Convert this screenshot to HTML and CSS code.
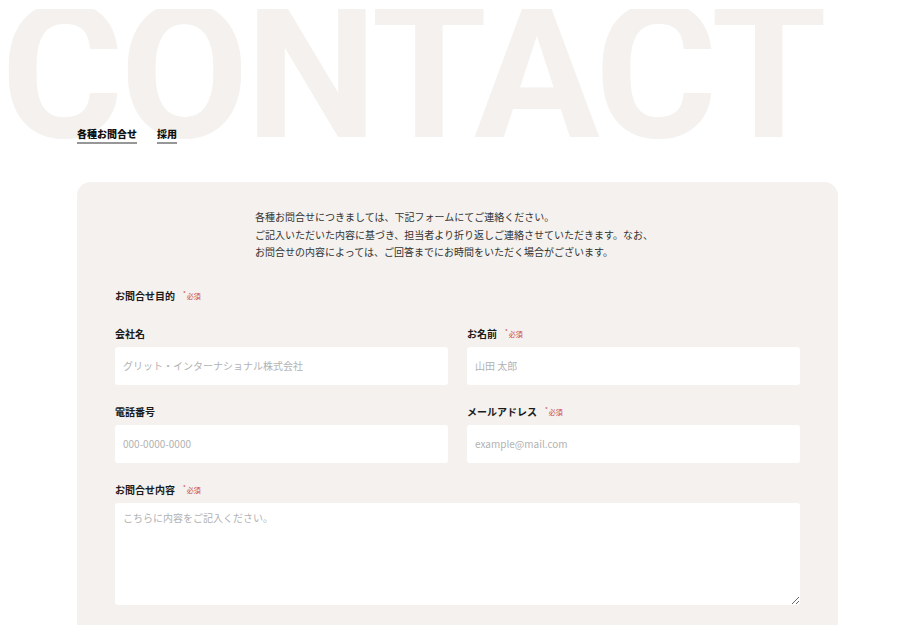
FILE: index.html
```html
<!DOCTYPE html>
<html lang="ja">
<head>
<meta charset="utf-8">
<title>CONTACT</title>
<link rel="stylesheet" href="styles.css">
</head>
<body>
<header class="hero">
  <div class="hero-word" aria-hidden="true">CONTACT</div>
  <nav class="tabs">
    <a class="tab" href="#">各種お問合せ</a>
    <a class="tab" href="#">採用</a>
  </nav>
</header>
<main class="card">
  <p class="intro">各種お問合せにつきましては、下記フォームにてご連絡ください。<br>ご記入いただいた内容に基づき、担当者より折り返しご連絡させていただきます。なお、<br>お問合せの内容によっては、ご回答までにお時間をいただく場合がございます。</p>
  <div class="purpose">
    <span class="label">お問合せ目的<span class="req"><span class="ast">*</span>必須</span></span>
  </div>
  <form class="grid">
    <label class="field">
      <span class="label">会社名</span>
      <input class="input" type="text" placeholder="グリット・インターナショナル株式会社">
    </label>
    <label class="field">
      <span class="label">お名前<span class="req"><span class="ast">*</span>必須</span></span>
      <input class="input" type="text" placeholder="山田 太郎">
    </label>
    <label class="field">
      <span class="label">電話番号</span>
      <input class="input" type="text" placeholder="000-0000-0000">
    </label>
    <label class="field">
      <span class="label">メールアドレス<span class="req"><span class="ast">*</span>必須</span></span>
      <input class="input" type="text" placeholder="example@mail.com">
    </label>
    <label class="field wide">
      <span class="label">お問合せ内容<span class="req"><span class="ast">*</span>必須</span></span>
      <textarea class="input textarea" placeholder="こちらに内容をご記入ください。"></textarea>
    </label>
  </form>
</main>
</body>
</html>
```
FILE: styles.css
```css
* { box-sizing: border-box; }
html, body { margin: 0; padding: 0; background: #fff; }
body {
  font-family: "Noto Sans CJK JP", "Noto Sans", sans-serif;
  color: #222;
  font-size: 10px;
}
.hero {
  display: grid;
  grid-template-rows: 135px;
  margin-top: 9px;
  height: 135px;
  overflow: hidden;
}
.hero-word {
  grid-area: 1 / 1;
  font-family: Roboto, "Liberation Sans", sans-serif;
  font-weight: 700;
  font-size: 187px;
  line-height: 187px;
  letter-spacing: -3.4px;
  color: #f4f1ee;
  margin-top: -29px;
  margin-left: 1px;
  white-space: nowrap;
  align-self: start;
}
.tabs {
  grid-area: 1 / 1;
  align-self: end;
  display: flex;
  gap: 20px;
  padding-left: 77px;
  position: relative;
}
.tab {
  display: block;
  font-size: 10px;
  font-weight: 900;
  line-height: 14px;
  color: #111;
  text-decoration: none;
  padding-bottom: 1px;
  border-bottom: 2px solid #979797;
}
.card {
  margin: 38px 77px 0;
  background: #f4f1ee;
  border-radius: 14px 14px 0 0;
  padding: 26px 38px 20px;
}
.intro {
  margin: 0;
  padding-left: 140px;
  font-size: 10px;
  line-height: 17.6px;
  color: #333;
}
.purpose { margin-top: 27px; margin-bottom: 22px; }
.label {
  display: flex;
  align-items: center;
  height: 16px;
  font-size: 10px;
  line-height: 16px;
  font-weight: 700;
  color: #1a1a1a;
}
.req {
  display: flex;
  align-items: flex-start;
  font-size: 7px;
  line-height: 10px;
  font-weight: 400;
  color: #c9464f;
  margin-left: 8px;
}
.ast { font-size: 6px; line-height: 6px; margin-right: 1px; }
.grid {
  display: grid;
  grid-template-columns: 333px 333px;
  column-gap: 19px;
  row-gap: 19px;
  margin: 0;
}
.field { display: flex; flex-direction: column; gap: 5px; }
.wide { grid-column: 1 / -1; }
.input {
  display: block;
  width: 100%;
  height: 38px;
  border: none;
  border-radius: 3px;
  background: #fff;
  padding: 0 8px;
  font-family: "Noto Sans CJK JP", "Noto Sans", sans-serif;
  font-size: 10px;
  color: #222;
  outline: none;
}
.input::placeholder { color: #b2b2b2; }
.textarea {
  height: 102px;
  padding: 7px 8px;
  resize: vertical;
  line-height: 16px;
}
```
